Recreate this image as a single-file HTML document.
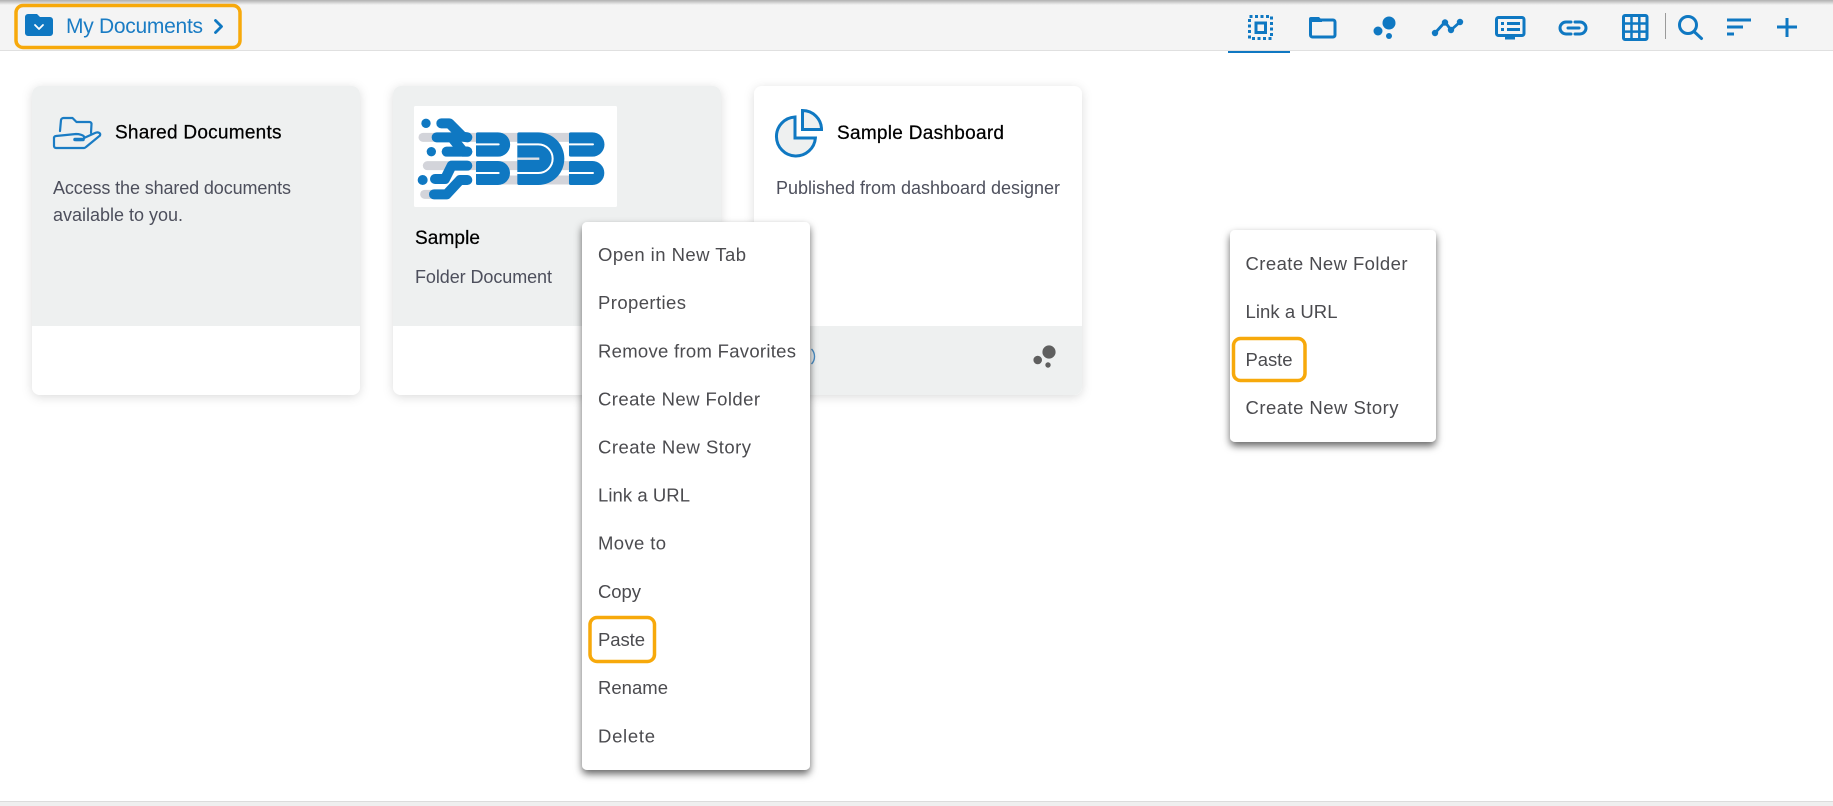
<!DOCTYPE html>
<html lang="en">
<head>
<meta charset="utf-8">
<title>My Documents</title>
<style>
html,body{margin:0;padding:0;width:1833px;height:806px;overflow:hidden;background:#fff}
svg{display:block;font-family:"Liberation Sans",Arial,sans-serif}
.m{font-size:18.5px;fill:#4b4b4f}
.d{font-size:18px;fill:#4d4f5c}
.t{font-size:19px;fill:#000;stroke:#000;stroke-width:.25}
</style>
</head>
<body>
<svg width="1833" height="806" viewBox="0 0 1833 806" xmlns="http://www.w3.org/2000/svg">
<defs>
<linearGradient id="tg" x1="0" y1="0" x2="0" y2="1"><stop offset="0" stop-color="#b0b0b0"/><stop offset="1" stop-color="#f4f4f4"/></linearGradient>
<filter id="cs" x="-10%" y="-10%" width="120%" height="120%"><feDropShadow dx="0" dy="2" stdDeviation="5" flood-color="#000" flood-opacity=".14"/></filter>
<filter id="ms" x="-15%" y="-15%" width="130%" height="130%"><feDropShadow dx="0" dy="4" stdDeviation="4" flood-color="#000" flood-opacity=".6"/></filter>
</defs>

<!-- top bar -->
<rect x="0" y="0" width="1833" height="50" fill="#f4f4f4"/>
<rect x="0" y="0" width="1833" height="5" fill="url(#tg)"/>
<rect x="0" y="50" width="1833" height="1" fill="#e0e0e0"/>
<rect x="1228" y="51" width="62" height="2" fill="#0f78c2"/>

<!-- breadcrumb -->
<path d="M25 17a3 3 0 0 1 3-3h9l3 3h10a3 3 0 0 1 3 3v13a3 3 0 0 1-3 3H28a3 3 0 0 1-3-3z" fill="#0f78c2"/>
<path d="M35 25l4 4 4-4" fill="none" stroke="#fff" stroke-width="1.800" stroke-linecap="round" stroke-linejoin="round"/>
<text x="66" y="33" font-size="21" fill="#1a7cc4" textLength="137" lengthAdjust="spacing">My Documents</text>
<path d="M215.500 20.500l6 6-6 6" fill="none" stroke="#0f78c2" stroke-width="2.800" stroke-linecap="round" stroke-linejoin="round"/>
<rect x="16" y="5.500" width="224" height="42" rx="7" fill="none" stroke="#f7a90b" stroke-width="3.500"/>

<!-- toolbar icons -->
<g fill="none" stroke="#0f78c2" stroke-width="3">
<rect x="1249.500" y="16.500" width="22" height="22" stroke-dasharray="3 2.500"/>
<rect x="1256" y="23" width="9.500" height="9.500"/>
<rect x="1310.500" y="20" width="24.500" height="17" rx="2"/>
<path d="M1568 28h11" stroke-linecap="round"/>
<path d="M1571 22h-5a6 6 0 0 0 0 12h5M1575 22h5a6 6 0 0 1 0 12h-5" stroke-linecap="round"/>
<rect x="1496.500" y="17.500" width="27.500" height="18" rx="2"/>
<rect x="1623.500" y="15.500" width="23.500" height="24" rx="1.500"/>
<path d="M1631.500 15v25M1639.300 15v25M1623 23.500h24.500M1623 31.600h24.500" stroke-width="2.500"/>
<path d="M1435 33l10-11 6 8 9-8" stroke-width="2.800"/>
<circle cx="1688" cy="25" r="8.500"/>
<path d="M1694 31.500l7.500 7" stroke-linecap="round"/>
<path d="M1787 18v19M1777 27h20"/>
</g>
<g fill="#0f78c2">
<path d="M1309 19a2 2 0 0 1 2-2h8l3 3v2h-13z"/>
<circle cx="1389" cy="23" r="6.500"/><circle cx="1378" cy="31" r="4.500"/><circle cx="1389" cy="36" r="3"/>
<circle cx="1435" cy="33" r="3.200"/><circle cx="1445" cy="22.500" r="3.200"/><circle cx="1451" cy="30" r="3.200"/><circle cx="1460" cy="22" r="3.200"/>
<rect x="1501" y="22" width="3" height="3"/><rect x="1507" y="22" width="13" height="3"/>
<rect x="1501" y="28" width="3" height="3"/><rect x="1507" y="28" width="13" height="3"/>
<rect x="1505" y="36" width="10" height="3.500"/>
<rect x="1727" y="18.500" width="24" height="3"/><rect x="1727" y="25.500" width="16" height="3"/><rect x="1727" y="32.500" width="7" height="3"/>
</g>
<rect x="1665" y="13" width="1" height="26" fill="#9a9a9a"/>

<!-- card 1 -->
<rect x="32" y="86" width="328" height="309" rx="8" fill="#fff" filter="url(#cs)"/>
<path d="M32 326V94a8 8 0 0 1 8-8h312a8 8 0 0 1 8 8v232z" fill="#eef0f0"/>
<g fill="none" stroke="#1a7cc4" stroke-width="2.200" stroke-linecap="round" stroke-linejoin="round">
<path d="M60 131l1-11a2.500 2.500 0 0 1 2.500-2h9l4 4h13a2 2 0 0 1 2 2l-.5 9"/>
<path d="M54 138a2 2 0 0 1 2-2l20-2c3 0 7 1 8 2.500 1 2-1 3.500-3 3.500h-5"/>
<path d="M84 138l11-5c3-1.500 6 0 5 2.500L86 147a4 4 0 0 1-2 1H56a2 2 0 0 1-2-2v-8"/>
</g>
<path d="M75 139.500h8" stroke="#1a7cc4" stroke-width="3.500" stroke-linecap="round"/>
<text class="t" x="115" y="138.500" textLength="166.500" lengthAdjust="spacing">Shared Documents</text>
<text class="d" x="53" y="194" textLength="238" lengthAdjust="spacing">Access the shared documents</text>
<text class="d" x="53" y="221" textLength="130" lengthAdjust="spacing">available to you.</text>

<!-- card 2 -->
<rect x="393" y="86" width="328" height="309" rx="8" fill="#fff" filter="url(#cs)"/>
<path d="M393 326V94a8 8 0 0 1 8-8h312a8 8 0 0 1 8 8v232z" fill="#eef0f0"/>
<rect x="414" y="106" width="203" height="101" rx="1.500" fill="#fff"/>
<g transform="translate(410 100) scale(.3333)">
  <g fill="none" stroke="#d3d4da" stroke-width="27" stroke-linecap="round">
    <path d="M39 112H550"/><path d="M52 197H550"/><path d="M280 240H500"/><path d="M44 283H90"/>
  </g>
  <g fill="none" stroke="#0f78c2" stroke-width="30" stroke-linecap="round" stroke-linejoin="round">
    <path d="M94 70h24l40 40 14 2"/>
    <path d="M80 112h45l35 43h12"/>
    <path d="M110 155h62"/>
    <path d="M172 197h-47l-20 40H75"/>
    <path d="M172 240h-22l-40 43H72"/>
  </g>
  <g fill="#0f78c2">
    <circle cx="48" cy="70" r="14"/><circle cx="64" cy="155" r="14"/><circle cx="38" cy="240" r="15"/>
    <path d="M203 97h61a36.500 36.500 0 0 1 0 73h-61a5 5 0 0 1-5-5v-63a5 5 0 0 1 5-5z"/>
    <path d="M203 183h61a36 36 0 0 1 0 72h-61a5 5 0 0 1-5-5v-62a5 5 0 0 1 5-5z"/>
    <path d="M482 97h65a36.500 36.500 0 0 1 0 73h-65a5 5 0 0 1-5-5v-63a5 5 0 0 1 5-5z"/>
    <path d="M482 183h65a36 36 0 0 1 0 72h-65a5 5 0 0 1-5-5v-62a5 5 0 0 1 5-5z"/>
    <path d="M327 97h58a78 79 0 0 1 0 158h-58a5 5 0 0 1-5-5V102a5 5 0 0 1 5-5z"/>
  </g>
  <g fill="none" stroke="#fff" stroke-width="6" stroke-linecap="round">
    <path d="M198 133h68M198 219h68M477 133h72M477 219h72"/>
    <path d="M322 133h63a43 43 0 0 1 0 86h-63"/>
  </g>
  <path d="M322 176h66" fill="none" stroke="#dfe0e5" stroke-width="7"/>
</g>
<text class="t" x="415" y="244" textLength="65" lengthAdjust="spacing">Sample</text>
<text class="d" x="415" y="283" textLength="137" lengthAdjust="spacing">Folder Document</text>

<!-- card 3 -->
<rect x="754" y="86" width="328" height="309" rx="8" fill="#fff" filter="url(#cs)"/>
<path d="M754 326h328v61a8 8 0 0 1-8 8H762a8 8 0 0 1-8-8z" fill="#eef0f0"/>
<g fill="#eef0f0" stroke="#0f78c2" stroke-width="3">
<path d="M795 117A19.500 19.500 0 1 0 815.400 138H795z"/>
<path d="M802.500 110.500A19 19 0 0 1 821.500 129.500H802.500z"/>
</g>
<text class="t" x="837" y="139" textLength="167" lengthAdjust="spacing">Sample Dashboard</text>
<text class="d" x="776" y="194" textLength="284" lengthAdjust="spacing">Published from dashboard designer</text>
<path d="M811.500 349c4 4 4 11 0 15" fill="none" stroke="#4b8fc7" stroke-width="1.400"/>
<g fill="#5f5f5f"><circle cx="1049" cy="352" r="6.600"/><circle cx="1037.700" cy="360" r="4.300"/><circle cx="1048" cy="365" r="2.700"/></g>

<!-- menu 1 -->
<rect x="582" y="222" width="228" height="548" rx="5" fill="#fff" filter="url(#ms)"/>
<text class="m" x="598" y="261" textLength="148" lengthAdjust="spacing">Open in New Tab</text>
<text class="m" x="598" y="309" textLength="88" lengthAdjust="spacing">Properties</text>
<text class="m" x="598" y="357.500" textLength="198" lengthAdjust="spacing">Remove from Favorites</text>
<text class="m" x="598" y="405.500" textLength="162" lengthAdjust="spacing">Create New Folder</text>
<text class="m" x="598" y="453.500" textLength="153" lengthAdjust="spacing">Create New Story</text>
<text class="m" x="598" y="501.500" textLength="92" lengthAdjust="spacing">Link a URL</text>
<text class="m" x="598" y="549.500" textLength="68" lengthAdjust="spacing">Move to</text>
<text class="m" x="598" y="598" textLength="43" lengthAdjust="spacing">Copy</text>
<text class="m" x="598" y="646" textLength="47" lengthAdjust="spacing">Paste</text>
<text class="m" x="598" y="694" textLength="70" lengthAdjust="spacing">Rename</text>
<text class="m" x="598" y="742.500" textLength="57" lengthAdjust="spacing">Delete</text>
<rect x="590" y="617.500" width="64.500" height="44" rx="7" fill="none" stroke="#f7a90b" stroke-width="3.500"/>

<!-- menu 2 -->
<rect x="1230" y="230" width="206" height="212" rx="5" fill="#fff" filter="url(#ms)"/>
<text class="m" x="1245.500" y="270" textLength="162" lengthAdjust="spacing">Create New Folder</text>
<text class="m" x="1245.500" y="318" textLength="92" lengthAdjust="spacing">Link a URL</text>
<text class="m" x="1245.500" y="366" textLength="47" lengthAdjust="spacing">Paste</text>
<text class="m" x="1245.500" y="414" textLength="153" lengthAdjust="spacing">Create New Story</text>
<rect x="1233.500" y="338.500" width="71.500" height="42" rx="7" fill="none" stroke="#f7a90b" stroke-width="3.500"/>

<!-- bottom bar -->
<rect x="0" y="801" width="1833" height="5" fill="#efefef"/>
<rect x="0" y="801" width="1833" height="1" fill="#dcdcdc"/>
</svg>
</body>
</html>
